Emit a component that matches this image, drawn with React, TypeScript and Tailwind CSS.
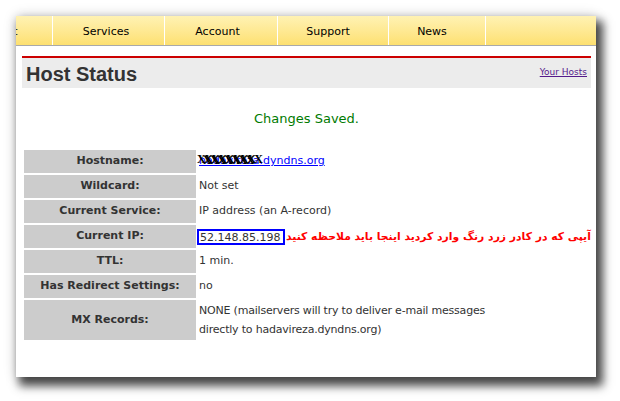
import React from "react";

const body = { fontFamily: '"DejaVu Sans", Verdana, sans-serif' };

function LabelCell({ children, tall }: { children: React.ReactNode; tall?: boolean }) {
  return (
    <div
      className={`bg-[#cccccc] flex items-center justify-center font-bold text-[11px] text-[#333333] ${tall ? "h-[40px]" : "h-[23px]"}`}
    >
      {children}
    </div>
  );
}

function ValueCell({ children, tall }: { children: React.ReactNode; tall?: boolean }) {
  return (
    <div className={`flex items-center pl-[1px] text-[11px] text-[#333333] ${tall ? "h-[40px]" : "h-[23px]"}`}>
      {children}
    </div>
  );
}

export default function App() {
  return (
    <div className="w-[620px] h-[401px] bg-white pt-[16px] pl-[16px] overflow-hidden" style={body}>
      <div className="w-[580px] h-[361px] bg-white shadow-[5px_7px_9px_2px_rgba(0,0,0,0.7),0_0_12px_rgba(0,0,0,0.18)] flex flex-col">
        {/* nav */}
        <div className="h-[30px] flex border-b border-[#a9a9a9] bg-gradient-to-b from-[#fff2b3] to-[#fde070] text-[11px] text-black">
          <div className="w-[37px] border-r border-white overflow-hidden flex items-center pt-[4px]">
            <span className="-ml-[31px] whitespace-nowrap">About</span>
          </div>
          <div className="w-[112px] border-r border-white flex items-center justify-center pr-[5px] pt-[4px]">Services</div>
          <div className="w-[113px] border-r border-white flex items-center justify-center pr-[7px] pt-[4px]">Account</div>
          <div className="w-[111px] border-r border-white flex items-center justify-center pr-[10px] pt-[4px]">Support</div>
          <div className="w-[97px] border-r border-white flex items-center justify-center pr-[10px] pt-[4px]">News</div>
          <div className="flex-1" />
        </div>

        <div className="pl-[6px] pr-[5px] flex flex-col">
          <div className="mt-[10px] h-[2px] bg-[#cc0000]" />
          <div className="h-[30px] bg-[#ececec] flex items-center justify-between pl-[4px] pr-[4px]">
            <span
              className="text-[20px] font-bold text-[#333333] leading-none mt-[2px]"
              style={{ fontFamily: '"Liberation Sans", Arial, sans-serif' }}
            >
              Host Status
            </span>
            <a href="#" className="text-[9px] text-[#551a8b] underline mb-[1px]">
              Your Hosts
            </a>
          </div>

          <div className="mt-[23px] text-center text-[13px] leading-[15px] text-[#007a00]">Changes Saved.</div>

          <div className="mt-[24px] ml-[2px] grid grid-cols-[172px_1fr] gap-[2px]">
            <LabelCell>Hostname:</LabelCell>
            <ValueCell>
              <span className="relative">
                <a href="#" className="text-[#0000ff] underline">hadavireza.dyndns.org</a>
                <span
                  aria-hidden="true"
                  className="absolute left-[-2px] top-[-1px] text-[12px] font-bold text-black tracking-[-1.5px] leading-[14px] whitespace-nowrap select-none"
                  style={{ fontFamily: '"Liberation Serif", serif' }}
                >
                  XXXXXXXXX
                </span>
                <span
                  aria-hidden="true"
                  className="absolute left-[4px] top-[0px] text-[12px] font-bold text-black tracking-[-1.5px] leading-[14px] whitespace-nowrap select-none"
                  style={{ fontFamily: '"Liberation Serif", serif' }}
                >
                  XXXXXXX
                </span>
              </span>
            </ValueCell>

            <LabelCell>Wildcard:</LabelCell>
            <ValueCell>Not set</ValueCell>

            <LabelCell>Current Service:</LabelCell>
            <ValueCell>IP address (an A-record)</ValueCell>

            <LabelCell>Current IP:</LabelCell>
            <ValueCell>
              <div className="flex items-center -ml-[2px] mt-[1px] whitespace-nowrap">
                <span className="border-2 border-[#0000ff] h-[16px] w-[88px] flex items-center pl-[1px] leading-none">
                  52.148.85.198
                </span>
                <span dir="rtl" className="ml-[1px] text-[10.8px] font-bold text-[#ff0000] leading-none">
                  آیپی که در کادر زرد رنگ وارد کردید اینجا باید ملاحظه کنید
                </span>
              </div>
            </ValueCell>

            <LabelCell>TTL:</LabelCell>
            <ValueCell>1 min.</ValueCell>

            <LabelCell>Has Redirect Settings:</LabelCell>
            <ValueCell>no</ValueCell>

            <LabelCell tall>MX Records:</LabelCell>
            <ValueCell tall>
              <div className="leading-[19px] tracking-[-0.2px]">
                NONE (mailservers will try to deliver e-mail messages
                <br />
                directly to hadavireza.dyndns.org)
              </div>
            </ValueCell>
          </div>
        </div>
      </div>
    </div>
  );
}
